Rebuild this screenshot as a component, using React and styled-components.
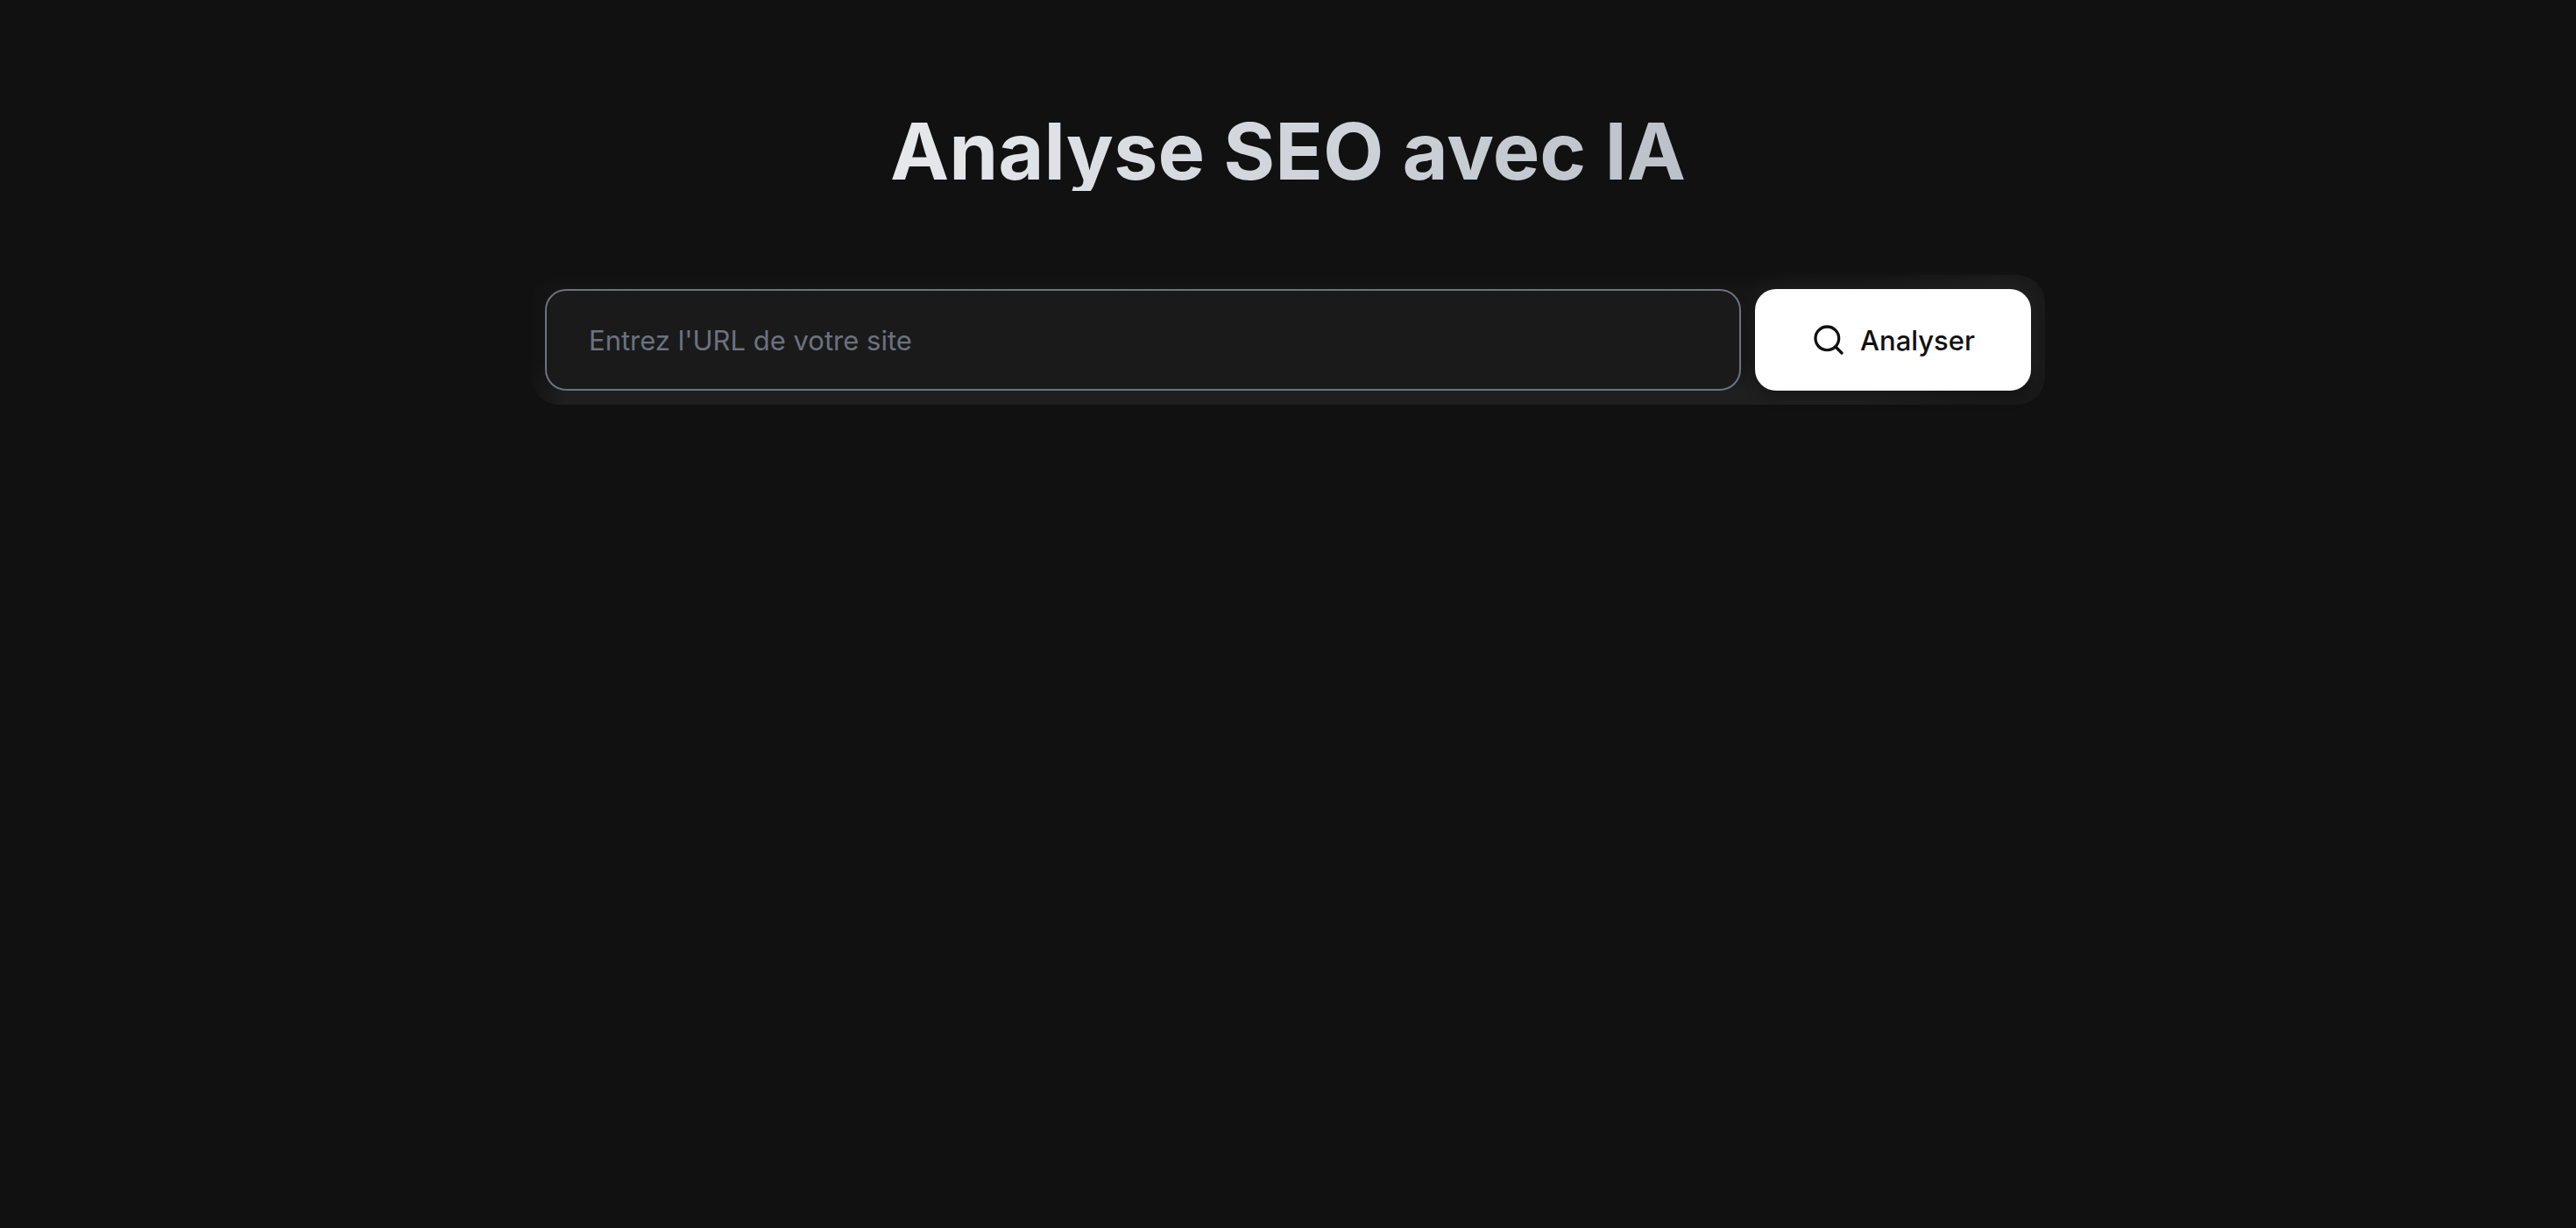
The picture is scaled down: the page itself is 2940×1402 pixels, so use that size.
import React, { useState } from 'react'
import styled, { createGlobalStyle } from 'styled-components'

const GlobalStyle = createGlobalStyle`
  *,
  *::before,
  *::after {
    box-sizing: border-box;
  }
  body {
    margin: 0;
    background: #111111;
    color: #ffffff;
    font-family: Inter, 'Liberation Sans', sans-serif;
  }
`
const Page = styled.main`
  max-width: 1792px;
  min-height: 100vh;
  margin: 0 auto;
  padding: 128px 32px 64px;
  @media (max-width: 768px) {
    padding: 48px 16px;
  }
`
const Title = styled.h1`
  margin: 0 0 96px;
  font-size: 90px;
  font-weight: 700;
  line-height: 90px;
  text-align: center;
  color: transparent;
  background: linear-gradient(to right, #f9fafb, #d1d5db, #a9afb9);
  background-clip: text;
  @media (max-width: 768px) {
    margin: 0 0 48px;
    font-size: 48px;
    line-height: 56px;
  }
`
const SearchForm = styled.form`
  display: flex;
  gap: 16px;
  padding: 16px;
  border-radius: 32px;
  background:
    linear-gradient(to right, rgba(17, 17, 17, 0.8), transparent 40px),
    linear-gradient(to right, transparent 88%, #191919 98%),
    linear-gradient(to bottom, #111111, #151515 12%, #151515 68%, #1f1f1f 90%);
  @media (max-width: 768px) {
    flex-direction: column;
  }
`
const UrlInput = styled.input`
  flex: 1;
  min-width: 0;
  height: 116px;
  padding: 0 48px;
  border: 2px solid #6b7280;
  border-radius: 24px;
  outline: none;
  background: #1a1a1a;
  color: #ffffff;
  font-family: inherit;
  font-size: 31px;
  &::placeholder {
    color: #6b7280;
    opacity: 1;
  }
`
const SubmitButton = styled.button`
  display: flex;
  align-items: center;
  justify-content: center;
  gap: 16px;
  height: 116px;
  padding: 0 64px;
  border: none;
  border-radius: 24px;
  background: #ffffff;
  color: #111111;
  font-family: inherit;
  font-size: 31px;
  font-weight: 500;
  box-shadow:
    0 10px 16px -4px rgba(0, 0, 0, 0.4),
    0 -4px 32px rgba(255, 255, 255, 0.06);
  cursor: pointer;
`
const Icon = styled.svg`
  flex: none;
  width: 40px;
  height: 40px;
`

function SearchIcon() {
  return (
    <Icon
      viewBox="0 0 24 24"
      fill="none"
      stroke="currentColor"
      strokeWidth="2"
      strokeLinecap="round"
      strokeLinejoin="round"
      aria-hidden="true"
    >
      <circle cx="11" cy="11" r="8" />
      <path d="m21 21-4.35-4.35" />
    </Icon>
  )
}

export default function App() {
  const [url, setUrl] = useState('')

  return (
    <>
      <GlobalStyle />
      <Page>
        <Title>Analyse SEO avec IA</Title>
        <SearchForm onSubmit={(e) => e.preventDefault()}>
          <UrlInput
            type="text"
            aria-label="Entrez l'URL de votre site"
            placeholder="Entrez l'URL de votre site"
            value={url}
            onChange={(e) => setUrl(e.target.value)}
          />
          <SubmitButton type="submit">
            <SearchIcon />
            Analyser
          </SubmitButton>
        </SearchForm>
      </Page>
    </>
  )
}
